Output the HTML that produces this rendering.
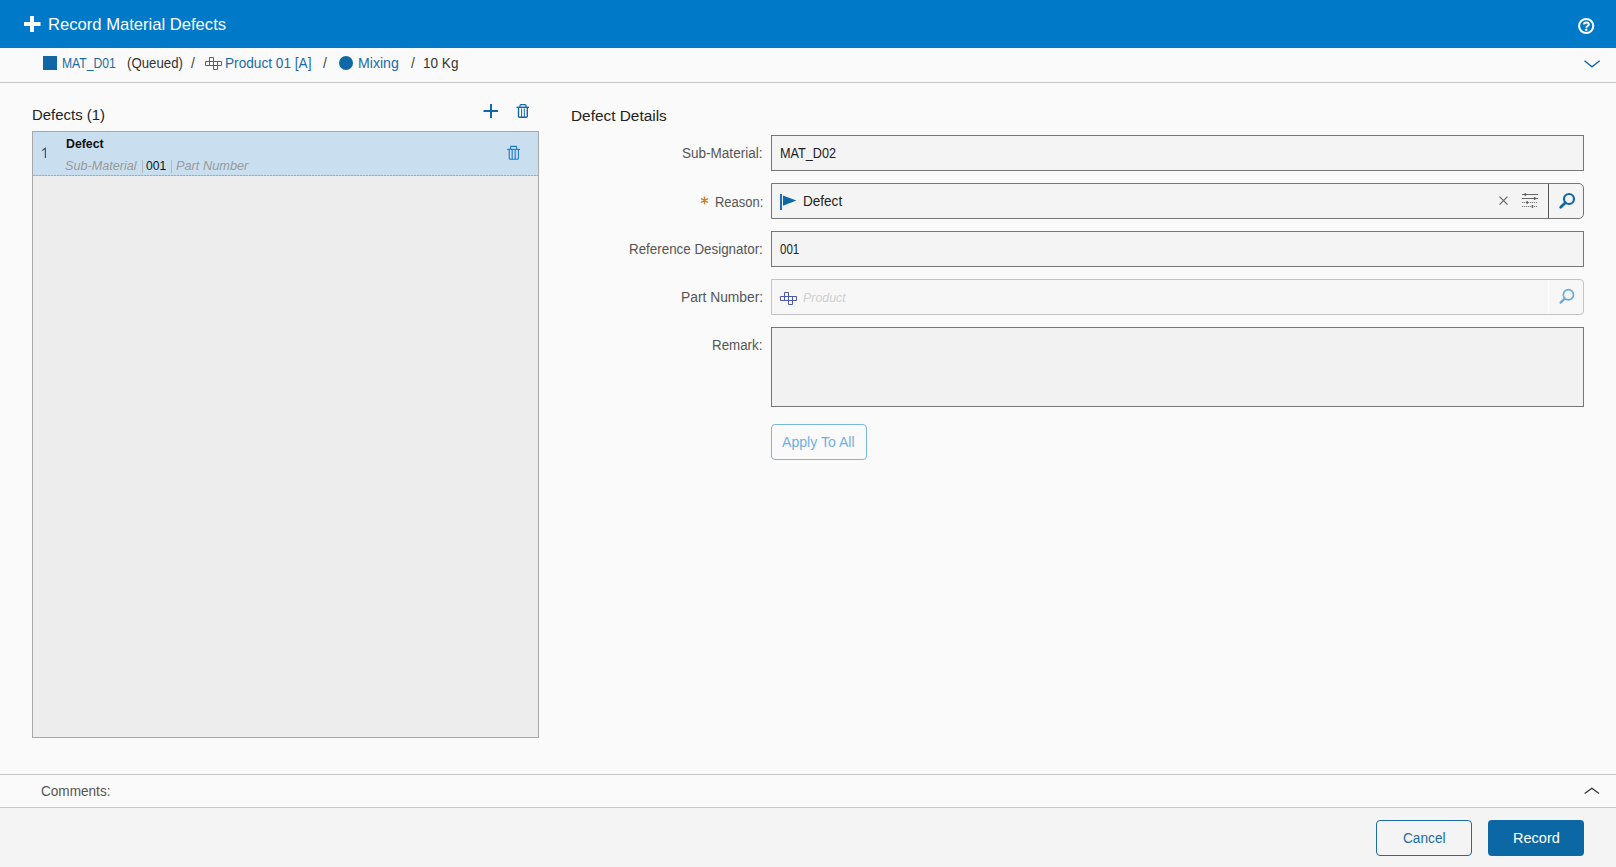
<!DOCTYPE html>
<html><head><meta charset="utf-8">
<style>
*{box-sizing:border-box;margin:0;padding:0}
html,body{width:1616px;height:867px;overflow:hidden;background:#fafafa;font-family:"Liberation Sans",sans-serif;color:#222}
.abs{position:absolute}
.tx{position:absolute;line-height:20px;white-space:nowrap;transform-origin:0 0;z-index:5}
#hdr{position:absolute;left:0;top:0;width:1616px;height:48px;background:#0079c8}
#bc{position:absolute;left:0;top:48px;width:1616px;height:35px;border-bottom:1px solid #c8c8c8;background:#fafafa}
#panel{position:absolute;left:32px;top:131px;width:507px;height:607px;border:1px solid #a8a8a8;background:#ededed}
#row{position:absolute;left:32px;top:131px;width:507px;height:45px;background:#c9dff0;border:1px solid #a8a8a8;border-bottom:none}
#rowline{position:absolute;left:33px;top:175px;width:505px;height:1px;background-image:linear-gradient(to right,#a9a9a9 0,#a9a9a9 2px,#a8d4f0 2px,#a8d4f0 3px);background-size:3px 1px}
.inp{position:absolute;left:771px;width:813px;height:36px;border:1px solid #767676;background:#f4f4f4}
#cm{position:absolute;left:0;top:774px;width:1616px;height:34px;border-top:1px solid #c8c8c8;border-bottom:1px solid #c8c8c8;background:#fafafa}
#ft{position:absolute;left:0;top:808px;width:1616px;height:59px;background:#f4f4f4}
.btn{position:absolute;top:820px;width:96px;height:36px;border-radius:4px}
</style></head><body>
<div id="hdr"></div>
<svg class="abs" style="left:0;top:0" width="48" height="48" viewBox="0 0 48 48"><path d="M30 16h4v6h6.5v4H34v6h-4v-6h-6v-4h6z" fill="#fff"/></svg>
<svg class="abs" style="left:1576px;top:16px" width="20" height="20" viewBox="0 0 20 20"><circle cx="10.2" cy="10" r="7.1" fill="none" stroke="#fff" stroke-width="2"/><path d="M8 8.6C8 7.2 9 6.4 10.4 6.4S12.8 7.2 12.8 8.4C12.8 10 10.4 10.1 10.4 11.7" fill="none" stroke="#fff" stroke-width="2"/><circle cx="10.3" cy="13.7" r="1.2" fill="#fff"/></svg>

<div id="bc"></div>
<div class="abs" style="left:43px;top:56px;width:14px;height:14px;background:#0f68a5"></div>
<svg class="abs" style="left:201px;top:53px" width="24" height="20" viewBox="0 0 24 20"><g fill="none" stroke="#5058a8" stroke-width="1"><path d="M8.5 4.5h4v4h-4zM4.5 8.5h16v4h-16zM8.5 8.5v4M12.5 8.5v4M16.5 8.5v4M12.5 12.5h4v4h-4z"/></g></svg>
<div class="abs" style="left:339px;top:56px;width:14px;height:14px;border-radius:50%;background:#0f68a5"></div>
<svg class="abs" style="left:1576px;top:50px" width="30" height="26" viewBox="0 0 30 26"><path d="M8.5 10.8L16 16.8L23.7 10.8" fill="none" stroke="#0f68a8" stroke-width="1.4"/></svg>

<svg class="abs" style="left:480px;top:100px" width="52" height="22" viewBox="0 0 52 22"><g fill="none" stroke="#0f68a8"><path d="M3.5 11H18M11 4V18" stroke-width="2"/><path d="M36.6 7.3H49" stroke-width="1.4"/><path d="M40 7V5.6Q40 4.6 41 4.6H45Q46 4.6 46 5.6V7" stroke-width="1.2"/><path d="M38.5 8V16.3Q38.5 17.3 39.5 17.3H46.3Q47.3 17.3 47.3 16.3V8" stroke-width="1.4"/><path d="M41.6 8.5V17M44.3 8.5V17" stroke-width="1"/></g></svg>
<div id="panel"></div>
<div id="row"></div>
<div id="rowline"></div>
<svg class="abs" style="left:502px;top:142px" width="24" height="22" viewBox="0 0 24 22"><g fill="none" stroke="#1a7ad0" stroke-width="1.1"><path d="M5 7.4H18"/><path d="M8.6 7V4.9Q8.6 4.4 9.1 4.4H14.1Q14.6 4.4 14.6 4.9V7"/><path d="M7.2 7.5V16Q7.2 17.3 8.5 17.3H15.1Q16.4 17.3 16.4 16V7.5"/><path d="M10.2 8V17M13.2 8V17"/></g></svg>
<div class="abs" style="left:142px;top:160px;width:1px;height:13px;background:#b0b8c0"></div>
<div class="abs" style="left:171px;top:160px;width:1px;height:13px;background:#b0b8c0"></div>
<svg class="abs" style="left:38px;top:144px" width="12" height="18" viewBox="0 0 12 18"><path d="M4.2 6.4L7.4 4.2V14" fill="none" stroke="#555" stroke-width="1.25"/></svg>

<div class="inp" style="top:135px"></div>
<svg class="abs" style="left:696px;top:192px" width="18" height="18" viewBox="0 0 18 18"><g stroke="#c8842f" stroke-width="1.5" stroke-linecap="round"><path d="M8.5 5.2V11.8M5.6 6.8L11.4 10.2M5.6 10.2L11.4 6.8"/></g></svg>
<div class="inp" style="top:183px;border-radius:0 5px 5px 0"></div>
<div class="abs" style="left:780px;top:194px;width:2px;height:16px;background:#166ec4"></div>
<svg class="abs" style="left:783px;top:195px" width="14" height="12" viewBox="0 0 14 12"><path d="M0 0.4L13.4 5.6L0 10.8z" fill="#0f68a5"/></svg>
<svg class="abs" style="left:1498px;top:195px" width="11" height="11" viewBox="0 0 11 11"><path d="M1.5 1.6l8 8M9.5 1.6l-8 8" stroke="#6a6a6a" stroke-width="1.3"/></svg>
<svg class="abs" style="left:1521px;top:193px" width="18" height="16" viewBox="0 0 18 16"><g stroke="#666" stroke-width="1"><path d="M1 1.5h16M1 5.5h16"/><path d="M1 9.5h16M1 13.5h16" stroke-dasharray="1.2 0.8" stroke="#777"/></g><g fill="#555"><rect x="3.6" y="0.2" width="1.5" height="2.6"/><rect x="12.9" y="4.2" width="1.5" height="2.6"/><rect x="5.4" y="8.2" width="1.5" height="2.6"/><rect x="10.7" y="12.2" width="1.5" height="2.6"/></g></svg>
<div class="abs" style="left:1548px;top:184px;width:1px;height:34px;background:#555"></div>
<svg class="abs" style="left:1557px;top:191px" width="20" height="20" viewBox="0 0 20 20"><circle cx="12" cy="8" r="5" fill="none" stroke="#0f68a5" stroke-width="2.2"/><path d="M8.3 11.7l-4.6 4.6" stroke="#0f68a5" stroke-width="2.8" stroke-linecap="round"/></svg>

<div class="inp" style="top:231px"></div>
<div class="inp" style="top:279px;border-color:#c4c4c4;background:#f7f7f7;border-radius:0 4px 4px 0"></div>
<svg class="abs" style="left:776px;top:288px" width="24" height="20" viewBox="0 0 24 20"><g fill="none" stroke="#5058a8" stroke-width="1"><path d="M8.5 4.5h4v4h-4zM4.5 8.5h16v4h-16zM8.5 8.5v4M12.5 8.5v4M16.5 8.5v4M12.5 12.5h4v4h-4z"/></g></svg>
<svg class="abs" style="left:1557px;top:287px" width="20" height="20" viewBox="0 0 20 20"><circle cx="11.4" cy="7.8" r="5.1" fill="none" stroke="#6aaadc" stroke-width="1.7"/><path d="M7.7 11.6L3.6 15.6" stroke="#6aaadc" stroke-width="2.3" stroke-linecap="round"/></svg><div class="abs" style="left:1548px;top:280px;width:1px;height:34px;background:#fcfcfc"></div>

<div class="inp" style="top:327px;height:80px;background:#f2f2f2"></div>
<div class="abs" style="left:771px;top:424px;width:96px;height:36px;border:1px solid #7ab8e0;border-radius:4px"></div>

<div id="cm"></div>
<svg class="abs" style="left:1576px;top:776px" width="30" height="26" viewBox="0 0 30 26"><path d="M8.7 17.5L15.9 12.2L23 17.5" fill="none" stroke="#333" stroke-width="1.3"/></svg>
<div id="ft"></div>
<div class="btn" style="left:1376px;border:1px solid #1a6ba8;background:#f4f4f4"></div>
<div class="btn" style="left:1488px;background:#0c68a4"></div>
<div id="hdr_t" class="tx" style="left:48.02px;top:15.00px;font-size:17px;font-weight:normal;font-style:normal;color:#fff;transform:scaleX(0.9765);">Record Material Defects</div>
<div id="bc1" class="tx" style="left:62.13px;top:53.00px;font-size:14px;font-weight:normal;font-style:normal;color:#1a6ba8;transform:scaleX(0.8661);">MAT_D01</div>
<div id="bc2" class="tx" style="left:127.00px;top:53.00px;font-size:14px;font-weight:normal;font-style:normal;color:#333;transform:scaleX(0.9456);">(Queued)</div>
<div id="bc3" class="tx" style="left:191.00px;top:53.00px;font-size:14px;font-weight:normal;font-style:normal;color:#444;">/</div>
<div id="bc4" class="tx" style="left:225.43px;top:53.00px;font-size:14px;font-weight:normal;font-style:normal;color:#1a6ba8;transform:scaleX(0.9743);">Product 01 [A]</div>
<div id="bc5" class="tx" style="left:323.00px;top:53.00px;font-size:14px;font-weight:normal;font-style:normal;color:#444;">/</div>
<div id="bc6" class="tx" style="left:357.99px;top:53.00px;font-size:14px;font-weight:normal;font-style:normal;color:#1a6ba8;transform:scaleX(1.0086);">Mixing</div>
<div id="bc7" class="tx" style="left:411.00px;top:53.00px;font-size:14px;font-weight:normal;font-style:normal;color:#444;">/</div>
<div id="bc8" class="tx" style="left:423.03px;top:53.00px;font-size:14px;font-weight:normal;font-style:normal;color:#333;transform:scaleX(0.9684);">10 Kg</div>
<div id="def1" class="tx" style="left:32.00px;top:105.00px;font-size:15px;font-weight:normal;font-style:normal;color:#222;transform:scaleX(0.9951);">Defects (1)</div>
<div id="rowd" class="tx" style="left:66.00px;top:134.00px;font-size:13px;font-weight:bold;font-style:normal;color:#111;transform:scaleX(0.9479);">Defect</div>
<div id="rows1" class="tx" style="left:65.30px;top:156.00px;font-size:13px;font-weight:normal;font-style:italic;color:#9a9a9a;transform:scaleX(0.9718);">Sub-Material</div>
<div id="rows2" class="tx" style="left:146.00px;top:156.00px;font-size:13px;font-weight:normal;font-style:normal;color:#111;transform:scaleX(0.9320);">001</div>
<div id="rows3" class="tx" style="left:176.00px;top:156.00px;font-size:13px;font-weight:normal;font-style:italic;color:#9a9a9a;transform:scaleX(0.9817);">Part Number</div>
<div id="dd" class="tx" style="left:571.01px;top:106.00px;font-size:15.5px;font-weight:normal;font-style:normal;color:#222;transform:scaleX(0.9924);">Defect Details</div>
<div id="l1" class="tx" style="left:682.40px;top:143.00px;font-size:14px;font-weight:normal;font-style:normal;color:#555;transform:scaleX(0.9664);">Sub-Material:</div>
<div id="l2" class="tx" style="left:714.57px;top:192.00px;font-size:14px;font-weight:normal;font-style:normal;color:#555;transform:scaleX(0.9253);">Reason:</div>
<div id="l3" class="tx" style="left:629.04px;top:239.00px;font-size:14px;font-weight:normal;font-style:normal;color:#555;transform:scaleX(0.9552);">Reference Designator:</div>
<div id="l4" class="tx" style="left:680.71px;top:287.00px;font-size:14px;font-weight:normal;font-style:normal;color:#555;transform:scaleX(0.9870);">Part Number:</div>
<div id="l5" class="tx" style="left:712.45px;top:335.00px;font-size:14px;font-weight:normal;font-style:normal;color:#555;transform:scaleX(0.9528);">Remark:</div>
<div id="v1" class="tx" style="left:779.69px;top:143.00px;font-size:14px;font-weight:normal;font-style:normal;color:#222;transform:scaleX(0.9053);">MAT_D02</div>
<div id="v2" class="tx" style="left:802.73px;top:191.00px;font-size:14px;font-weight:normal;font-style:normal;color:#222;transform:scaleX(0.9678);">Defect</div>
<div id="v3" class="tx" style="left:780.00px;top:239.00px;font-size:14px;font-weight:normal;font-style:normal;color:#222;transform:scaleX(0.8230);">001</div>
<div id="v4" class="tx" style="left:803.00px;top:288.00px;font-size:13px;font-weight:normal;font-style:italic;color:#cfcfcf;transform:scaleX(0.9526);">Product</div>
<div id="apply" class="tx" style="left:781.70px;top:432.00px;font-size:14px;font-weight:normal;font-style:normal;color:#72b0de;transform:scaleX(1.0064);">Apply To All</div>
<div id="cmt" class="tx" style="left:40.60px;top:781.00px;font-size:14px;font-weight:normal;font-style:normal;color:#555;transform:scaleX(0.9705);">Comments:</div>
<div id="cancel" class="tx" style="left:1403.00px;top:828.00px;font-size:14px;font-weight:normal;font-style:normal;color:#1a6ba8;transform:scaleX(0.9754);">Cancel</div>
<div id="record" class="tx" style="left:1512.66px;top:828.00px;font-size:14px;font-weight:normal;font-style:normal;color:#fff;transform:scaleX(1.0382);">Record</div>
</body></html>
